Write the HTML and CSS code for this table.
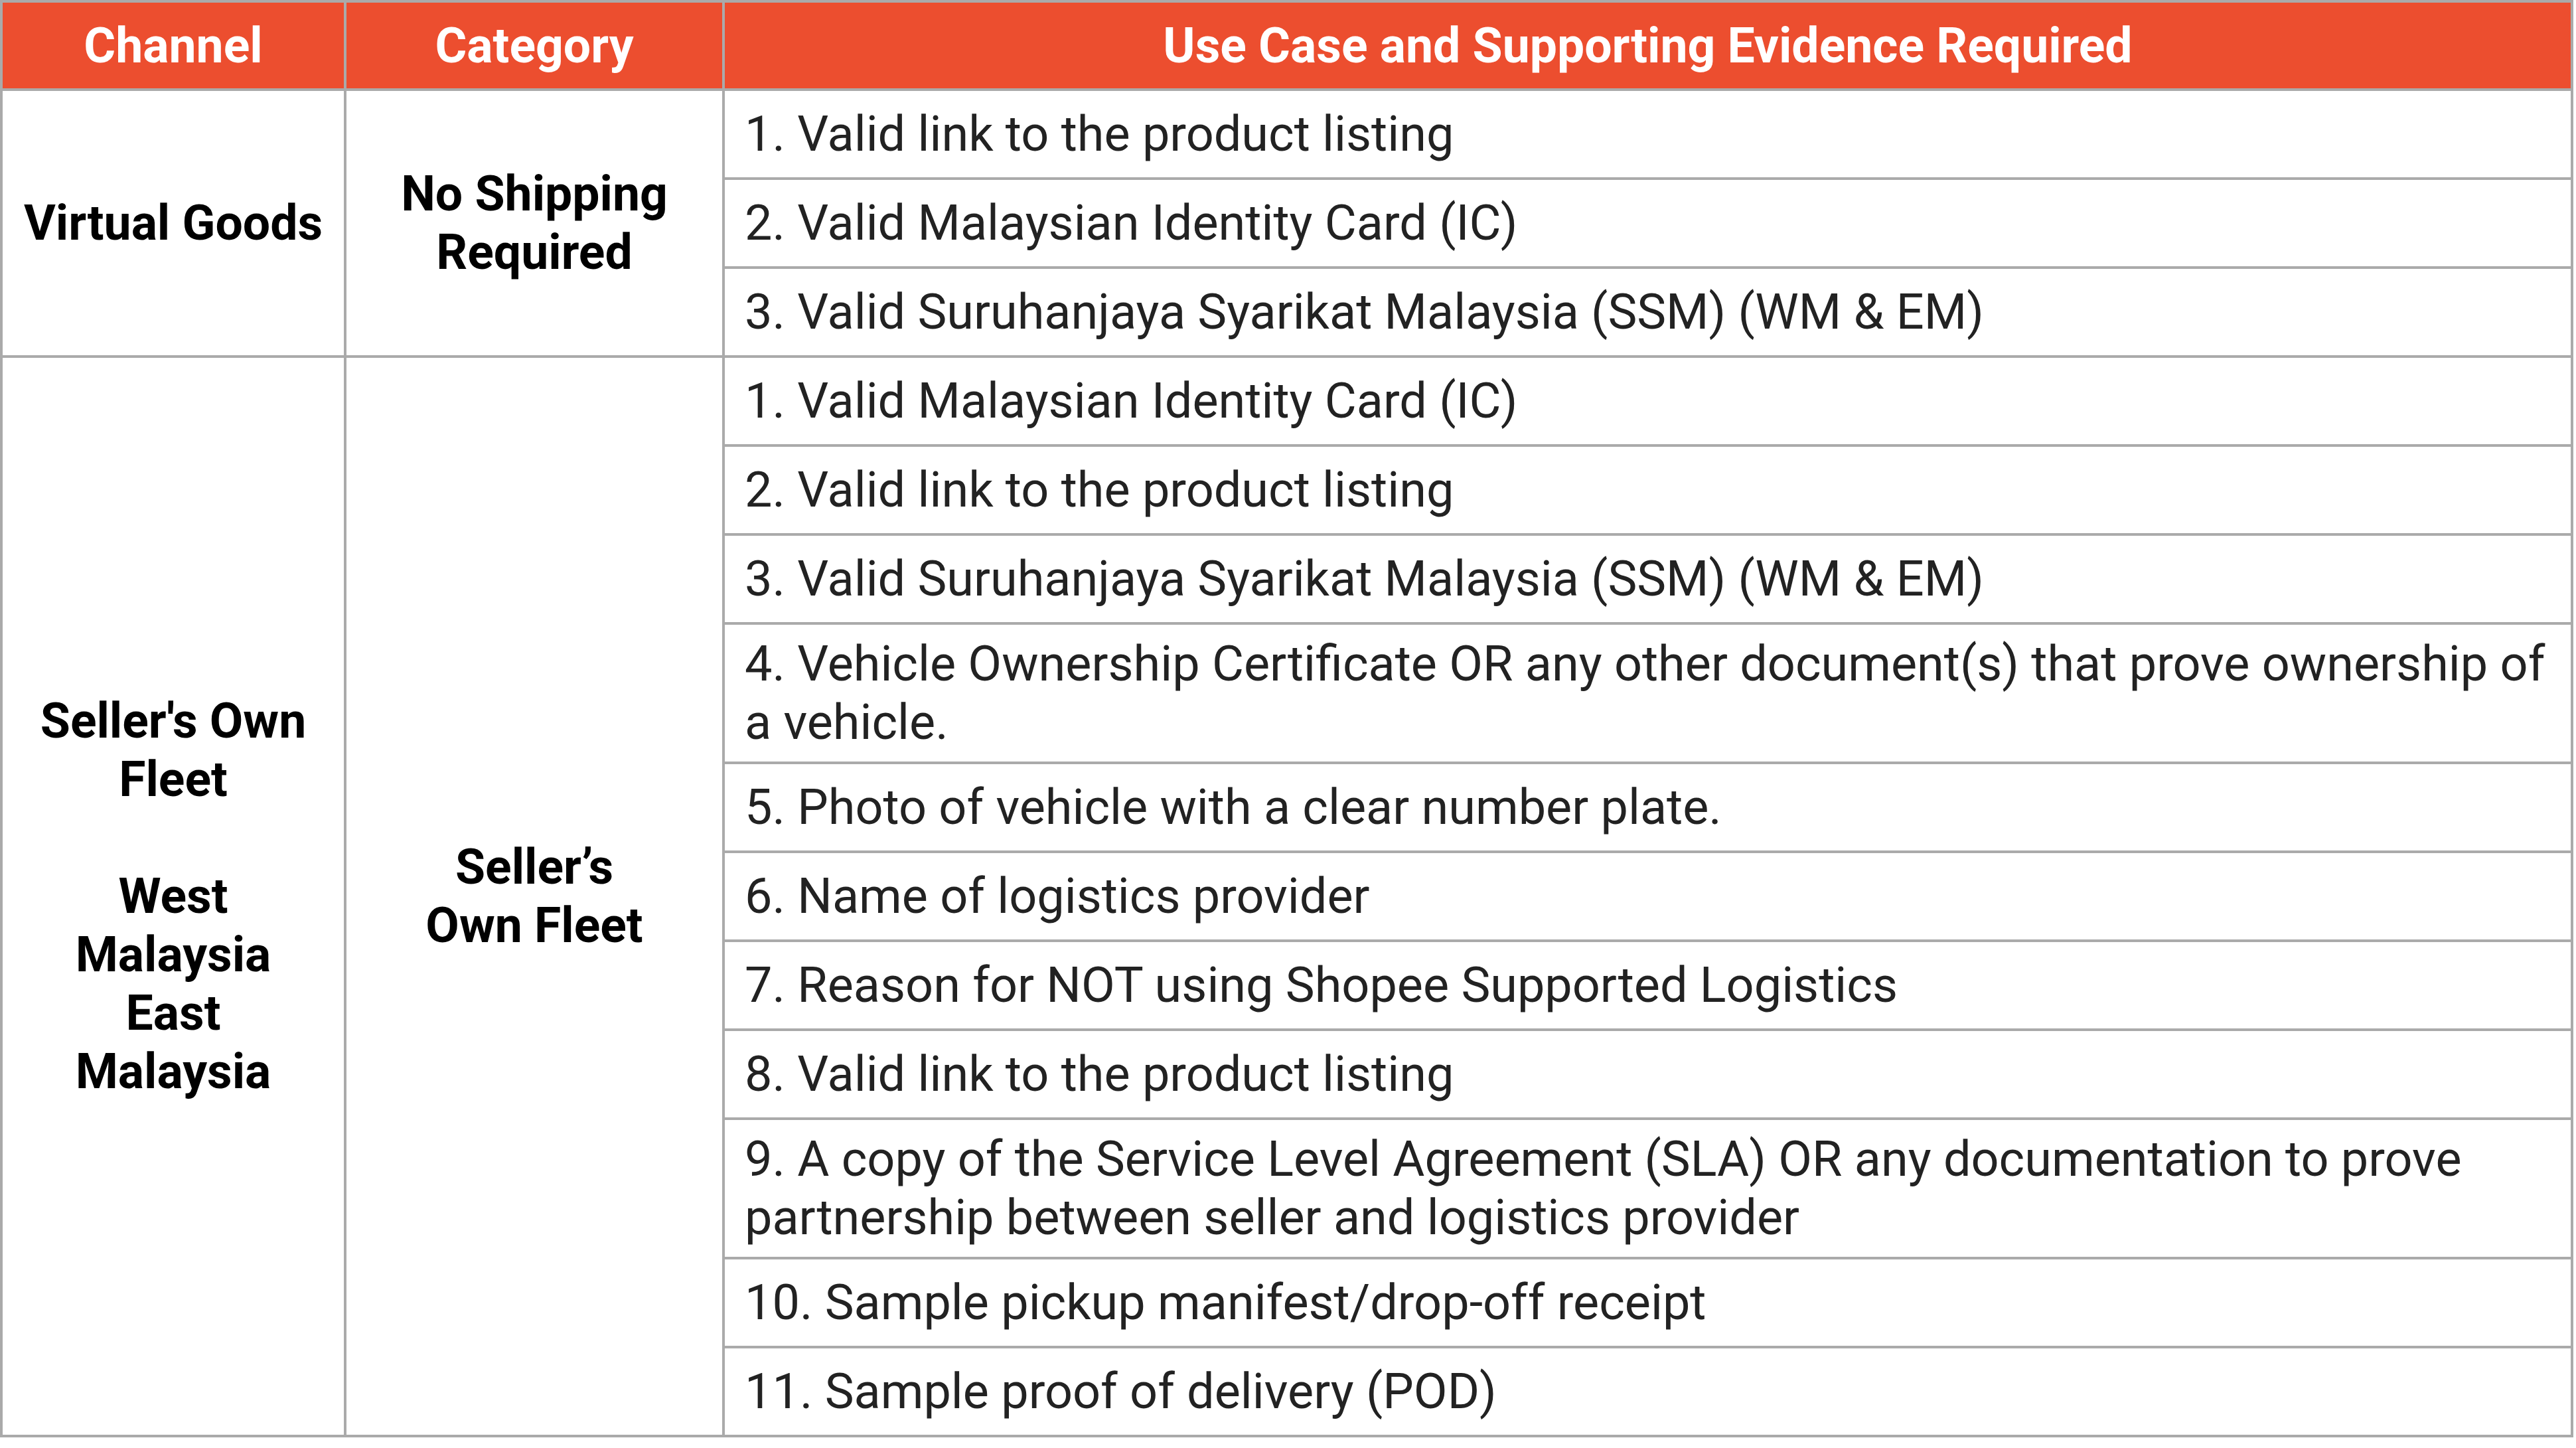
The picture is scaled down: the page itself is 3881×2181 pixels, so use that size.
FILE: index.html
```html
<!DOCTYPE html>
<html>
<head>
<meta charset="utf-8">
<link rel="stylesheet" href="styles.css">
</head>
<body>
<table class="req">
  <colgroup>
    <col class="c1">
    <col class="c2">
    <col class="c3">
  </colgroup>
  <thead>
    <tr>
      <th>Channel</th>
      <th>Category</th>
      <th>Use Case and Supporting Evidence Required</th>
    </tr>
  </thead>
  <tbody>
    <tr>
      <td class="group" rowspan="3">Virtual Goods</td>
      <td class="group" rowspan="3">No Shipping<br>Required</td>
      <td class="item">1. Valid link to the product listing</td>
    </tr>
    <tr><td class="item">2. Valid Malaysian Identity Card (IC)</td></tr>
    <tr><td class="item">3. Valid Suruhanjaya Syarikat Malaysia (SSM) (WM &amp; EM)</td></tr>
    <tr>
      <td class="group" rowspan="11">Seller's Own<br>Fleet<br><br>West<br>Malaysia<br>East<br>Malaysia</td>
      <td class="group" rowspan="11">Seller’s<br>Own Fleet</td>
      <td class="item">1. Valid Malaysian Identity Card (IC)</td>
    </tr>
    <tr><td class="item">2. Valid link to the product listing</td></tr>
    <tr><td class="item">3. Valid Suruhanjaya Syarikat Malaysia (SSM) (WM &amp; EM)</td></tr>
    <tr><td class="item">4. Vehicle Ownership Certificate OR any other document(s) that prove ownership of a vehicle.</td></tr>
    <tr><td class="item">5. Photo of vehicle with a clear number plate.</td></tr>
    <tr><td class="item">6. Name of logistics provider</td></tr>
    <tr><td class="item">7. Reason for NOT using Shopee Supported Logistics</td></tr>
    <tr><td class="item">8. Valid link to the product listing</td></tr>
    <tr><td class="item">9. A copy of the Service Level Agreement (SLA) OR any documentation to prove partnership between seller and logistics provider</td></tr>
    <tr><td class="item">10. Sample pickup manifest/drop-off receipt</td></tr>
    <tr><td class="item">11. Sample proof of delivery (POD)</td></tr>
  </tbody>
</table>
</body>
</html>
```
FILE: styles.css
```css
html, body {
  margin: 0;
  padding: 0;
  background: #ffffff;
}
body {
  font-family: Roboto, "Liberation Sans", sans-serif;
}
.req {
  width: 3877px;
  border-collapse: collapse;
  table-layout: fixed;
}
.c1 { width: 518px; }
.c2 { width: 570px; }
.req th, .req td {
  border: 4px solid #aaaaaa;
  font-size: 73.3px;
  line-height: 88px;
}
.req th {
  background: #ec4e2f;
  color: #ffffff;
  font-weight: 700;
  text-align: center;
  padding: 21px 20px 20px;
}
.req td.group {
  font-weight: 700;
  color: #000000;
  text-align: center;
  vertical-align: middle;
  padding: 0 12px;
}
.req td.item {
  color: #222222;
  font-size: 73.8px;
  font-weight: 400;
  text-align: left;
  vertical-align: middle;
  height: 100px;
  padding: 15px 28px 15px 30px;
}
```
